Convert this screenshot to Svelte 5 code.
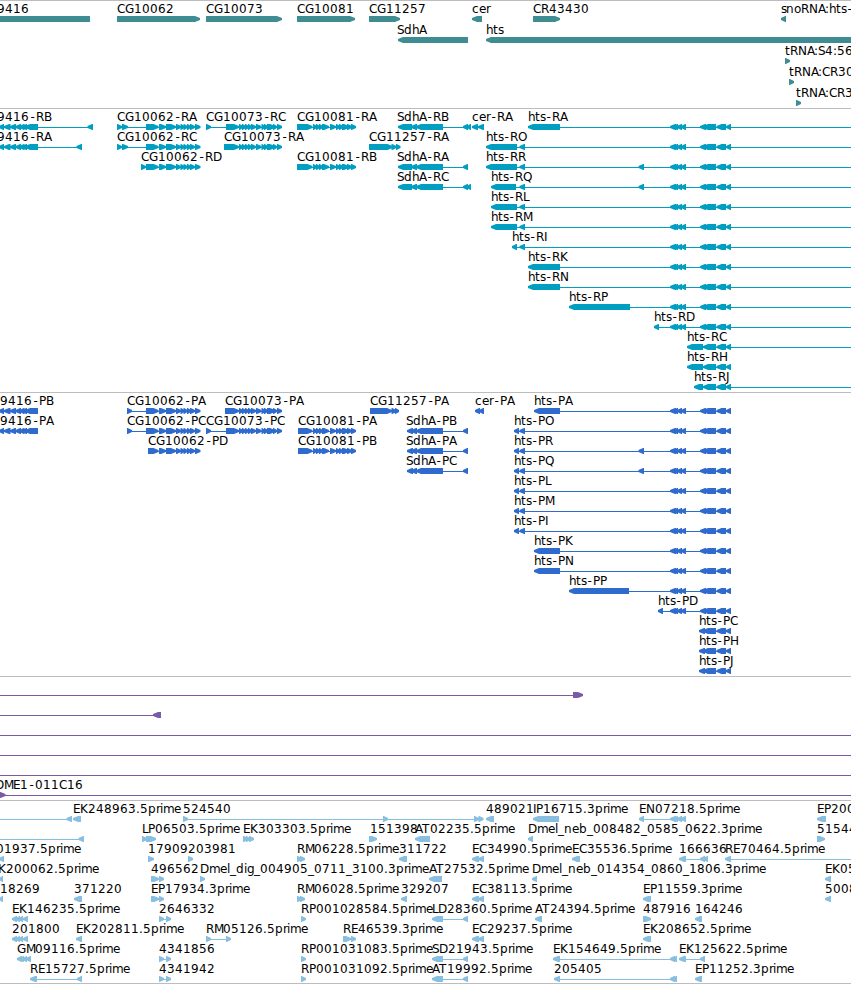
<script>
    const WIDTH = 851

    const ADVANCE = {
        C: 8, G: 9, E: 7, K: 8, R: 8, P: 7, D: 9, L: 6, M: 9, A: 7, I: 3, J: 4, N: 9, O: 9, Q: 9, H: 9, S: 7, T: 8, B: 8,
        a: 7, b: 8, c: 7, d: 8, e: 7, g: 7, h: 7, i: 3, l: 3, m: 11, n: 8, o: 7, p: 8, r: 4, s: 5, t: 5,
        "-": 7, "_": 6, ".": 4, ":": 4
    }

    // Exons are [start, width] pairs
    const cg9416 = [[-1, 5], [4, 6.5], [10, 6], [15.5, 5.5], [19.5, 5], [22, 5], [25, 13]]
    const cg10062Tail = [[159, 7], [166, 10], [176, 5], [180.5, 4], [183.5, 4], [187, 4], [190, 5], [195, 5.5]]
    const cg10062 = [[146, 12.5], ...cg10062Tail]
    const cg10073Tail = [[239, 4], [242, 4], [245, 4], [248, 4], [251, 5], [256, 5.5], [261.5, 4], [264, 4], [267, 8], [273, 4], [277, 5]]
    const cg10073 = [[226, 13], ...cg10073Tail]
    const cg10081 = [[313, 4], [316, 4], [319, 4], [322, 7], [330, 6], [336, 4], [339, 4], [342, 7], [347, 5], [351, 5]]
    const sdha = [[411, 6], [416, 27], [463, 5]]
    const htsEnd = [[716.5, 9.5], [726, 5]]
    const htsMid = [[670, 6], [673, 5], [677, 5], [681, 5]]
    const hts = [...htsMid, [700, 6], [703, 13], ...htsEnd]
    const near = [519.5, 5.5]
    const far = [638.5, 5.5]
    const pair = [[159, 5], [166, 5]]
    const ec = [[472, 7], [478, 6]]
    const rm = [[297, 5], [300, 5]]
    const ld = [[432, 11], [463, 5]]
    const ek = [[12, 5], [16, 4], [19, 4], [23, 5]]

    // Feature: row, label, direction, exons and optional label x / line start / line end
    function f(row, label, dir, exons, opts = {}) {
        return {row, label, dir, exons, ...opts}
    }

    const open = {to: WIDTH}

    const tracks = [
        {
            name: "genes", height: 108, pitch: 21, top: 16, color: "#3f8c92",
            features: [
                f(0, "9416", "<", [[-8, 98]], {at: -3}),
                f(0, "CG10062", ">", [[117, 83]]),
                f(0, "CG10073", ">", [[206, 76]]),
                f(0, "CG10081", ">", [[297, 58]]),
                f(0, "CG11257", ">", [[369, 31]]),
                f(0, "cer", "<", [[472, 10]]),
                f(0, "CR43430", ">", [[533, 27]]),
                f(0, "snoRNA:hts-", "<", [[781, 5]]),
                f(1, "SdhA", "<", [[398, 70]], {at: 397}),
                f(1, "hts", "<", [[486, 375]]),
                f(2, "tRNA:S4:56", ">", [[785, 5]]),
                f(3, "tRNA:CR30", ">", [[789, 5]]),
                f(4, "tRNA:CR3", ">", [[796, 5]])
            ]
        },
        {
            name: "transcripts", height: 284, pitch: 20, top: 16, color: "#009fc2",
            features: [
                f(0, "9416-RB", "<", [...cg9416, [87.5, 5.5]], {at: -3}),
                f(0, "CG10062-RA", ">", [[117, 5], [122, 6], ...cg10062]),
                f(0, "CG10073-RC", ">", [[206, 5], ...cg10073]),
                f(0, "CG10081-RA", ">", [[297, 15.5], ...cg10081]),
                f(0, "SdhA-RB", "<", [[398, 14], ...sdha, [467, 4]], {at: 397}),
                f(0, "cer-RA", "<", [[472, 6], [478, 6]]),
                f(0, "hts-RA", "<", [[528, 32], ...hts], open),
                f(1, "9416-RA", "<", [...cg9416, [76.5, 5.5]], {at: -3}),
                f(1, "CG10062-RC", ">", [[117, 5], [122, 6], ...cg10062]),
                f(1, "CG10073-RA", ">", [[224, 15], ...cg10073Tail]),
                f(1, "CG11257-RA", ">", [[369, 23.5], [391.5, 5], [396, 4.5]]),
                f(1, "hts-RO", "<", [[486, 31], near, ...hts], open),
                f(2, "CG10062-RD", ">", [[141, 5], ...cg10062]),
                f(2, "CG10081-RB", ">", [[297, 15.5], ...cg10081]),
                f(2, "SdhA-RA", "<", [[398, 14], ...sdha], {at: 397}),
                f(2, "hts-RR", "<", [[486, 31], near, far, ...hts], open),
                f(3, "SdhA-RC", "<", [[398, 14], ...sdha, [467, 4]], {at: 397}),
                f(3, "hts-RQ", "<", [[491, 25], near, far, ...hts], open),
                f(4, "hts-RL", "<", [[491, 26], near, ...hts], open),
                f(5, "hts-RM", "<", [[491, 26], near, ...hts], open),
                f(6, "hts-RI", "<", [[512, 5], near, ...hts], open),
                f(7, "hts-RK", "<", [[528, 32], ...hts], open),
                f(8, "hts-RN", "<", [[528, 32], ...hts], open),
                f(9, "hts-RP", "<", [[569, 61], ...hts], open),
                f(10, "hts-RD", "<", [[654, 5], ...hts], open),
                f(11, "hts-RC", "<", [[687, 16], [703, 13], ...htsEnd], open),
                f(12, "hts-RH", "<", [[687, 16], [703, 13], ...htsEnd]),
                f(13, "hts-RJ", "<", [[694, 9], [703, 13], ...htsEnd], open)
            ]
        },
        {
            name: "proteins", height: 284, pitch: 20, top: 16, color: "#2f6bcd",
            features: [
                f(0, "9416-PB", "<", cg9416, {at: 0}),
                f(0, "CG10062-PA", ">", [[127, 5], ...cg10062]),
                f(0, "CG10073-PA", ">", [[225, 14], ...cg10073Tail]),
                f(0, "CG11257-PA", ">", [[370, 22], [391.5, 5], [395, 4]]),
                f(0, "cer-PA", "<", [[475, 5], [479, 5]]),
                f(0, "hts-PA", "<", [[534, 26], ...hts]),
                f(1, "9416-PA", "<", cg9416, {at: 0}),
                f(1, "CG10062-PC", ">", [[127, 5], ...cg10062]),
                f(1, "CG10073-PC", ">", [[206, 5], ...cg10073]),
                f(1, "CG10081-PA", ">", [[298, 14.5], ...cg10081]),
                f(1, "SdhA-PB", "<", [[407, 6], ...sdha], {at: 406}),
                f(1, "hts-PO", "<", [[514, 5], near, ...hts]),
                f(2, "CG10062-PD", ">", [[148, 10.5], ...cg10062Tail]),
                f(2, "CG10081-PB", ">", [[298, 14.5], ...cg10081]),
                f(2, "SdhA-PA", "<", [[407, 6], ...sdha], {at: 406}),
                f(2, "hts-PR", "<", [[514, 5], near, far, ...hts]),
                f(3, "SdhA-PC", "<", [[407, 6], ...sdha], {at: 406}),
                f(3, "hts-PQ", "<", [[514, 5], near, far, ...hts]),
                f(4, "hts-PL", "<", [[514, 5], near, ...hts]),
                f(5, "hts-PM", "<", [[514, 5], near, ...hts]),
                f(6, "hts-PI", "<", [[514, 5], near, ...hts]),
                f(7, "hts-PK", "<", [[534, 26], ...hts]),
                f(8, "hts-PN", "<", [[534, 26], ...hts]),
                f(9, "hts-PP", "<", [[569, 60], ...hts]),
                f(10, "hts-PD", "<", [[658, 5], ...hts]),
                f(11, "hts-PC", "<", [[699, 6], [703, 13], ...htsEnd]),
                f(12, "hts-PH", "<", [[699, 6], [703, 13], ...htsEnd]),
                f(13, "hts-PJ", "<", [[699, 6], [703, 13], ...htsEnd])
            ]
        },
        {
            name: "clones", height: 124, pitch: 20, top: 16, color: "#7a5aa8",
            features: [
                f(0, "", ">", [[573, 10]], {from: 0}),
                f(1, "", "<", [[153, 8]], {from: 0}),
                f(2, "", ">", [], {from: 0, to: WIDTH}),
                f(3, "", ">", [], {from: 0, to: WIDTH}),
                f(4, "", ">", [], {from: 0, to: WIDTH}),
                f(5, "DME1-011C16", ">", [[-3, 8.5]], {at: -5, to: WIDTH})
            ]
        },
        {
            name: "ests", height: 183, pitch: 20, top: 16, color: "#88bedf",
            features: [
                f(0, "", "<", [[66.5, 5.5]], {from: 0}),
                f(0, "EK248963.5prime", "<", [[73, 8]]),
                f(0, "524540", ">", [[183, 5], [383, 5], [474, 5], [478.5, 5]]),
                f(0, "489021", "<", [[486, 8]]),
                f(0, "IP16715.3prime", "<", [[533, 26]]),
                f(0, "EN07218.5prime", "<", [[639, 5], ...htsMid]),
                f(0, "EP200", "<", [[817, 9]]),
                f(1, "", "<", [[78.5, 5.5]], {from: 0}),
                f(1, "LP06503.5prime", ">", [[142, 5], [146, 10]]),
                f(1, "EK303303.5prime", ">", [[243, 5], [246, 4], [249, 5]]),
                f(1, "151398", ">", [[369, 8]], {at: 370}),
                f(1, "AT02235.5prime", "<", [[415, 15]]),
                f(1, "Dmel_neb_008482_0585_0622.3prime", "<", [[528, 5]]),
                f(1, "51544", ">", [[817, 8]]),
                f(2, "01937.5prime", "<", [[-1, 5]], {at: -4}),
                f(2, "17909", ">", [[148, 6]]),
                f(2, "203981", ">", [[188, 5]]),
                f(2, "RM06228.5prime", ">", rm),
                f(2, "311722", "<", [[399, 8]]),
                f(2, "EC34990.5prime", "<", ec),
                f(2, "EC35536.5prime", "<", [[572, 8]]),
                f(2, "166636", "<", [[679, 7], [700, 5], [703, 5]]),
                f(2, "RE70464.5prime", "<", [[725, 6]], open),
                f(3, "K200062.5prime", "<", [[-1, 4]], {at: -2}),
                f(3, "496562", ">", [[151, 8], [159, 5]]),
                f(3, "Dmel_dig_004905_0711_3100.3prime", ">", [[200, 5]]),
                f(3, "AT27532.5prime", "<", [[429, 13]]),
                f(3, "Dmel_neb_014354_0860_1806.3prime", "<", [[532, 5]]),
                f(3, "EK05", "<", [[825, 6]]),
                f(4, "18269", "<", [[-1, 4]], {at: 0}),
                f(4, "371220", "<", [[74, 8]]),
                f(4, "EP17934.3prime", ">", [[151, 8], [159, 5]]),
                f(4, "RM06028.5prime", ">", rm),
                f(4, "329207", "<", [[401, 6]]),
                f(4, "EC38113.5prime", "<", ec),
                f(4, "EP11559.3prime", "<", [[643, 8]]),
                f(4, "5008", "<", [[825, 6]]),
                f(5, "EK146235.5prime", "<", ek),
                f(5, "2646332", ">", pair),
                f(5, "RP001028584.5prime", ">", [[301, 5]]),
                f(5, "LD28360.5prime", "<", ld),
                f(5, "AT24394.5prime", "<", [[535, 7]]),
                f(5, "487916", ">", [[643, 8]]),
                f(5, "164246", "<", [[695, 7]]),
                f(6, "201800", "<", ek),
                f(6, "EK202811.5prime", "<", [[76, 6]]),
                f(6, "RM05126.5prime", ">", [[206, 5], [226, 5]]),
                f(6, "RE46539.3prime", ">", [[343, 8], [351, 5]]),
                f(6, "EC29237.5prime", "<", ec),
                f(6, "EK208652.5prime", "<", [[643, 8]]),
                f(7, "GM09116.5prime", "<", [[17, 5], [20, 4], [23, 4], [26, 5]]),
                f(7, "4341856", ">", pair),
                f(7, "RP001031083.5prime", ">", [[301, 5]]),
                f(7, "SD21943.5prime", "<", ld),
                f(7, "EK154649.5prime", "<", [[553, 7], [670, 5], [672, 5]]),
                f(7, "EK125622.5prime", "<", [[679, 7], [700, 5]]),
                f(8, "RE15727.5prime", "<", [[30, 7], [77, 5]]),
                f(8, "4341942", ">", pair),
                f(8, "RP001031092.5prime", ">", [[301, 5]]),
                f(8, "AT19992.5prime", "<", ld),
                f(8, "205405", "<", [[554, 6], [670, 5], [672, 5]]),
                f(8, "EP11252.3prime", "<", [[695, 7]])
            ]
        }
    ]

    // One x per character, so labels keep whole-pixel spacing
    function charPositions(feature) {
        let x = feature.at ?? feature.exons[0][0]
        return [...feature.label].map(ch => {
            // the hyphen sits in the middle of its wide cell
            const here = ch === "-" ? x + 1.5 : x
            x += ADVANCE[ch] ?? 8
            return here
        }).join(" ")
    }

    // Box with a slightly rounded arrow head on the side it points to
    function exonPoints([x, w], dir, y) {
        const head = Math.min(w * 0.85, 5)
        const end = x + w
        const mid = head * 0.5
        if (dir === ">") {
            return `${x},${y} ${end - head},${y} ${end - mid},${y + 1} ${end},${y + 2} ${end},${y + 4} ${end - mid},${y + 5} ${end - head},${y + 6} ${x},${y + 6}`
        }
        return `${x},${y + 2} ${x + mid},${y + 1} ${x + head},${y} ${end},${y} ${end},${y + 6} ${x + head},${y + 6} ${x + mid},${y + 5} ${x},${y + 4}`
    }

    function lineStart(feature) {
        return feature.from ?? feature.exons[0][0]
    }

    function lineEnd(feature) {
        if (feature.to) return feature.to
        const last = feature.exons[feature.exons.length - 1]
        return last[0] + last[1] - 2
    }
</script>

<main class="browser">
    {#each tracks as track}
        <section class="track">
            <svg width={WIDTH} height={track.height - 1} viewBox="0 1 {WIDTH} {track.height - 1}" fill={track.color}>
                {#each track.features as feature}
                    {@const y = track.top + feature.row * track.pitch}
                    {#if feature.exons.length !== 1 || feature.from !== undefined || feature.to}
                        <rect x={lineStart(feature)} y={y + 3} width={lineEnd(feature) - lineStart(feature)} height="1" />
                    {/if}
                    {#each feature.exons as exon}
                        <polygon points={exonPoints(exon, feature.dir, y)} />
                    {/each}
                    {#if feature.label}
                        <text class="label" x={charPositions(feature)} y={y - 3}>{feature.label}</text>
                    {/if}
                {/each}
            </svg>
        </section>
    {/each}
</main>

<style>
    :global(body) {
        margin: 0;
        background: #fff;
    }
    .browser {
        width: 851px;
        height: 984px;
        box-sizing: border-box;
        overflow: hidden;
    }
    .track {
        border-top: 1px solid #bdbdbd;
    }
    .track:last-child {
        border-bottom: 1px solid #bdbdbd;
    }
    .track svg {
        display: block;
    }
    .label {
        font-family: "DejaVu Sans", Verdana, sans-serif;
        font-size: 12px;
        fill: #000;
    }
</style>
